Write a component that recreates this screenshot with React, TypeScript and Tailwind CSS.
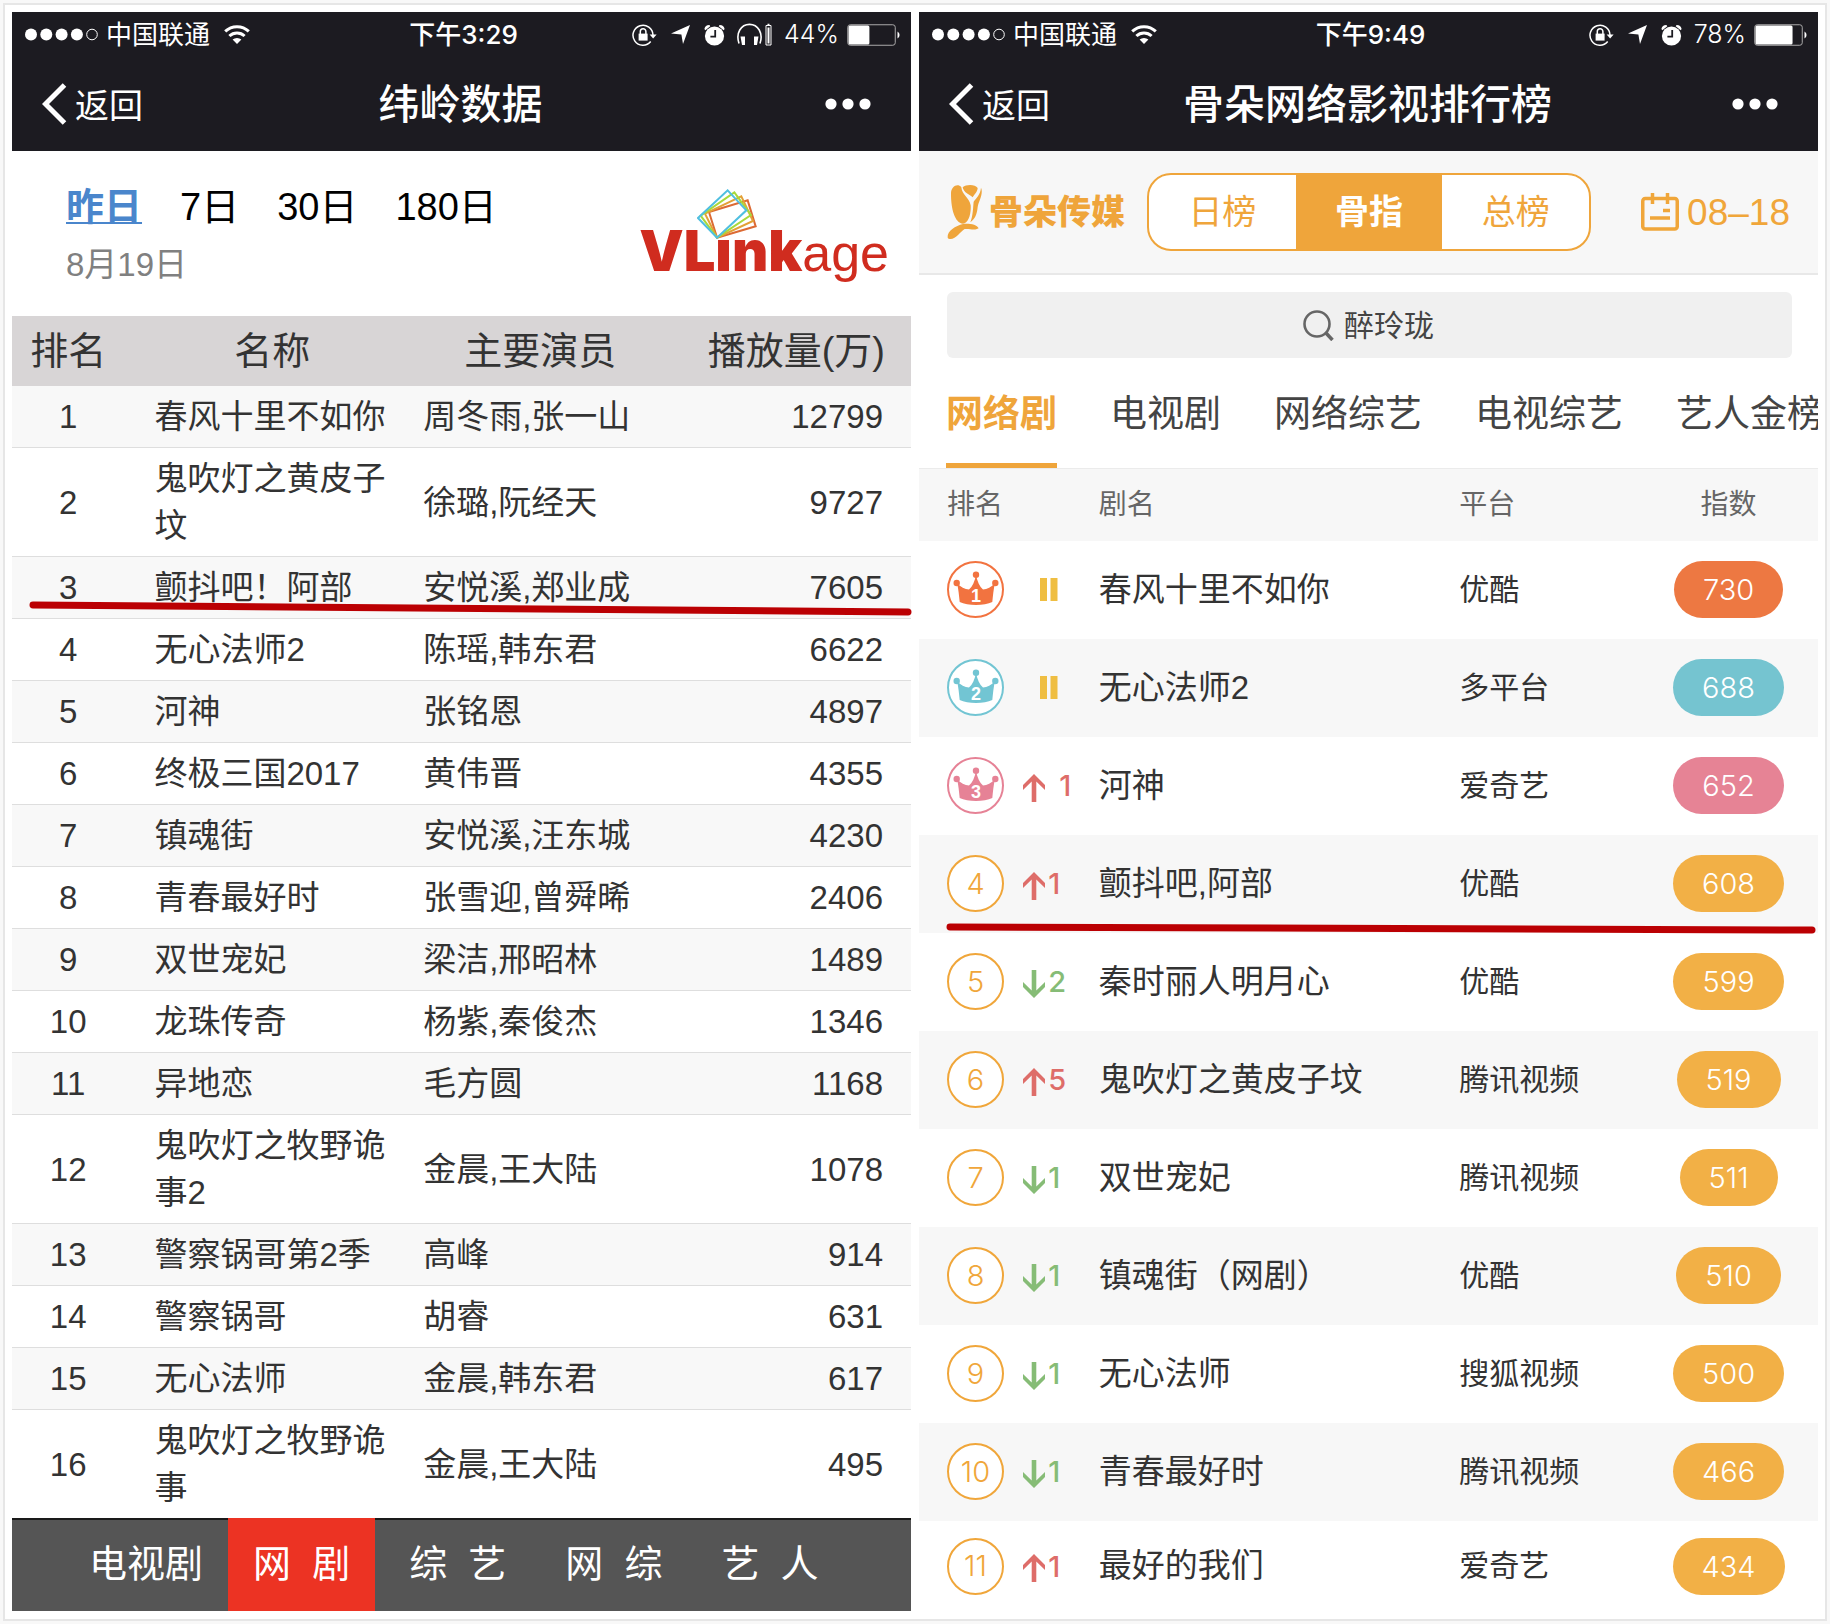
import React, { useState } from 'react';
import clsx from 'clsx';

const plays = [
  ['春风十里不如你', '周冬雨,张一山', 12799],
  ['鬼吹灯之黄皮子坟', '徐璐,阮经天', 9727],
  ['颤抖吧！阿部', '安悦溪,郑业成', 7605],
  ['无心法师2', '陈瑶,韩东君', 6622],
  ['河神', '张铭恩', 4897],
  ['终极三国2017', '黄伟晋', 4355],
  ['镇魂街', '安悦溪,汪东城', 4230],
  ['青春最好时', '张雪迎,曾舜晞', 2406],
  ['双世宠妃', '梁洁,邢昭林', 1489],
  ['龙珠传奇', '杨紫,秦俊杰', 1346],
  ['异地恋', '毛方圆', 1168],
  ['鬼吹灯之牧野诡事2', '金晨,王大陆', 1078],
  ['警察锅哥第2季', '高峰', 914],
  ['警察锅哥', '胡睿', 631],
  ['无心法师', '金晨,韩东君', 617],
  ['鬼吹灯之牧野诡事', '金晨,王大陆', 495],
];

// change > 0 moved up, < 0 moved down, 0 unchanged
const indexes = [
  { name: '春风十里不如你', platform: '优酷', change: 0, value: 730 },
  { name: '无心法师2', platform: '多平台', change: 0, value: 688 },
  { name: '河神', platform: '爱奇艺', change: 1, value: 652 },
  { name: '颤抖吧,阿部', platform: '优酷', change: 1, value: 608 },
  { name: '秦时丽人明月心', platform: '优酷', change: -2, value: 599 },
  { name: '鬼吹灯之黄皮子坟', platform: '腾讯视频', change: 5, value: 519 },
  { name: '双世宠妃', platform: '腾讯视频', change: -1, value: 511 },
  { name: '镇魂街（网剧）', platform: '优酷', change: -1, value: 510 },
  { name: '无心法师', platform: '搜狐视频', change: -1, value: 500 },
  { name: '青春最好时', platform: '腾讯视频', change: -1, value: 466 },
  { name: '最好的我们', platform: '爱奇艺', change: 1, value: 434 },
];

const medalText = ['text-[#f27340]', 'text-[#72c5d3]', 'text-[#e68296]'];
const medalBg = ['bg-[#ed7842]', 'bg-[#75c4d0]', 'bg-[#e68395]'];

function Wifi() {
  return (
    <svg viewBox="0 0 26 19" className="ml-3.5 h-[19px] w-[26px]" fill="none" stroke="white" strokeWidth="3">
      <path d="M1.2 6.4a17 17 0 0 1 23.6 0" />
      <path d="M5.4 11a11 11 0 0 1 15.2 0" />
      <path d="M8.6 14.6a6.6 6.6 0 0 1 8.8 0L13 19z" fill="white" stroke="none" />
    </svg>
  );
}

function LockIcon() {
  return (
    <svg viewBox="0 0 25 22" className="h-[22px] w-[25px]" fill="none" stroke="white" strokeWidth="1.5">
      <path d="M18.7 17.6A10 10 0 1 1 21 11" />
      <path d="M17.6 10.6h7l-3.5 4z" fill="white" stroke="none" />
      <path d="M8.3 10V7.6a2.8 2.8 0 0 1 5.6 0V10" />
      <path d="M6.6 9.6h9v7h-9z" fill="white" stroke="none" />
    </svg>
  );
}

function ArrowIcon() {
  return (
    <svg viewBox="0 0 19 19" className="ml-3.5 size-[19px]" fill="white">
      <path d="M19 0 12 19 10.4 9.6 0 8.6z" />
    </svg>
  );
}

function AlarmIcon() {
  return (
    <svg viewBox="0 0 21 22" className="ml-3.5 h-[22px] w-[21px]" fill="white">
      <circle cx="10.5" cy="12" r="9.6" />
      <path d="M.4 5A5 5 0 0 1 5.4 1l.9 1.2-5 4zM20.6 5a5 5 0 0 0-5-4l-.9 1.2 5 4z" />
      <path d="M11.2 6v6.6H6.4" fill="none" stroke="#1c1b21" strokeWidth="1.8" />
    </svg>
  );
}

function HeadphoneIcon() {
  return (
    <svg viewBox="0 0 35 23" className="ml-3 h-[23px] w-[35px]" fill="none" stroke="white" strokeWidth="1.6">
      <path d="M2 20.5C-1.5 10 4 1.4 12.5 1.4S26.5 10 23 20.5" />
      <path d="M3.5 13.5h4.5v8.5H5zM17 13.5h4.5L20 22h-3z" fill="white" stroke="none" />
      <path d="M29 2.5h5v19.5h-5z" strokeWidth="1" />
      <path d="M30.5 4.5h2v16h-2zM30.5.8h2V2h-2z" fill="white" stroke="none" />
    </svg>
  );
}

function Battery({ level }: { level: number }) {
  return (
    <svg viewBox="0 0 54 22" className="ml-2 h-[22px] w-[54px]">
      <rect x=".75" y=".75" width="47.5" height="20.5" rx="2.5" fill="none" stroke="#aaa" />
      <rect x="1.5" y="1.5" width={level * 0.475} height="19" rx="1.5" fill="white" />
      <path d="M50.5 7.5a4 4 0 0 1 0 7z" fill="white" />
    </svg>
  );
}

function PhoneHeader({ time, title, level, headphones }: { time: string; title: string; level: number; headphones?: boolean }) {
  return (
    <header className="bg-[#1c1b21] text-white">
      <div className="grid h-11 grid-cols-[1fr_auto_1fr] items-center pt-px pr-2 pl-3 text-[26px] leading-none font-['Inter','Noto_Sans_CJK_SC',sans-serif]">
        <div className="flex items-center">
          <svg viewBox="0 0 74 13" className="mr-2 h-[13px] w-[74px]" fill="white">
            <circle cx="7" cy="6.5" r="6" />
            <circle cx="22.3" cy="6.5" r="6" />
            <circle cx="37.6" cy="6.5" r="6" />
            <circle cx="52.9" cy="6.5" r="6" />
            <circle cx="68" cy="6.5" r="5.3" fill="none" stroke="white" />
          </svg>
          <span>中国联通</span>
          <Wifi />
        </div>
        <span className="font-medium">{time}</span>
        <div className="flex items-center justify-end pr-0.5">
          <LockIcon />
          <ArrowIcon />
          <AlarmIcon />
          {headphones && <HeadphoneIcon />}
          <span className="ml-3 text-[25px] font-light">{level}%</span>
          <Battery level={level} />
        </div>
      </div>
      <div className="grid h-[95px] grid-cols-[1fr_auto_1fr] items-center pr-8 pl-[30px]">
        <a href="#" className="flex items-center gap-2 text-[34px] leading-none">
          <svg viewBox="0 0 25 42" className="h-[42px] w-[25px]" fill="none" stroke="white" strokeWidth="5">
            <path d="M22.5 2 3.5 21l19 19" />
          </svg>
          <span className="pt-1">返回</span>
        </a>
        <h1 className="pt-1 text-[41px] leading-none font-medium">{title}</h1>
        <button aria-label="更多" className="mr-2 justify-self-end">
          <svg viewBox="0 0 46 12" className="h-3 w-[46px]" fill="white">
            <circle cx="6" cy="6" r="5.6" />
            <circle cx="23" cy="6" r="5.6" />
            <circle cx="40" cy="6" r="5.6" />
          </svg>
        </button>
      </div>
    </header>
  );
}

function VLinkageLogo() {
  return (
    <div className="relative mt-[70px] mr-[22px] h-[60px] whitespace-nowrap text-[52px] leading-[60px] text-[#d02c1f]">
      <span className="font-['Inter',sans-serif] text-[56px] font-black">VLınk</span>
      <span>age</span>
      <svg viewBox="269 62 180 150" className="absolute -top-8 left-[58px] h-[50px] w-[60px]" fill="none" strokeWidth="6">
        <path d="m421 96 24 78-116 34-24-77z" stroke="#dc6a34" />
        <path d="m402 84 35 74-108 50-36-72z" stroke="#e3a136" />
        <path d="m381 72 50 68-102 68-49-66z" stroke="#a8d93a" />
        <path d="m361 66 56 60-88 82-57-59z" stroke="#50bfe0" />
      </svg>
    </div>
  );
}

// red marker line along the bottom of a row
function Marker({ d }: { d: string }) {
  return (
    <svg viewBox="0 0 899 20" preserveAspectRatio="none" className="pointer-events-none absolute bottom-0 left-0 z-10 h-5 w-full overflow-visible" fill="none" stroke="#bb0003" strokeWidth="7" strokeLinecap="round">
      <path d={d} />
    </svg>
  );
}

function PlayRanking() {
  const [range, setRange] = useState('昨日');
  const [tab, setTab] = useState('网\u00a0\u00a0剧');

  return (
    <section className="min-w-0 bg-white">
      <PhoneHeader time="下午3:29" title="纬岭数据" level={44} headphones />
      <div className="flex h-[165px] justify-between pl-[54px]">
        <div className="pt-8">
          <div className="flex gap-[38px] text-[38px] leading-[48px] text-black">
            {['昨日', '7日', '30日', '180日'].map((r) => (
              <button
                key={r}
                onClick={() => setRange(r)}
                className={clsx('cursor-pointer', r === range && 'font-bold text-[#4a86cc] underline decoration-2 underline-offset-2')}
              >
                {r}
              </button>
            ))}
          </div>
          <p className="mt-3.5 text-[33px] leading-10 text-[#808080]">8月19日</p>
        </div>
        <VLinkageLogo />
      </div>
      <table className="w-full table-fixed text-[33px] leading-[47px] text-[#333]">
        <colgroup>
          <col className="w-[12.5%]" />
          <col className="w-[32.9%]" />
          <col className="w-[26.7%]" />
          <col />
        </colgroup>
        <thead>
          <tr className="h-[70px] bg-[#d8d5d6] text-[38px] whitespace-nowrap">
            <th className="font-normal">排名</th>
            <th className="px-8 font-normal">名称</th>
            <th className="font-normal">主要演员</th>
            <th className="pr-[26px] text-right font-normal">播放量(万)</th>
          </tr>
        </thead>
        <tbody>
          {plays.map(([name, actors, count], i) => (
            <tr key={name} className="relative border-b border-[#dedede] odd:bg-[#f8f8f8] last:border-0">
              <td className="text-center">
                {i + 1}
                {i === 2 && <Marker d="M21 7 896 14" />}
              </td>
              <td className="py-[7px] pr-8 pl-[30px]">{name}</td>
              <td className="pl-[3px] whitespace-nowrap">{actors}</td>
              <td className="pr-7 text-right">{count}</td>
            </tr>
          ))}
        </tbody>
      </table>
      <nav className="flex h-[93px] border-t-2 border-[#1a1a1a] bg-[#555] pl-[52px] text-[38px] text-white">
        {['电视剧', '网\u00a0\u00a0剧', '综\u00a0\u00a0艺', '网\u00a0\u00a0综', '艺\u00a0\u00a0人'].map((t, i) => (
          <button
            key={t}
            onClick={() => setTab(t)}
            className={clsx('-mt-0.5 cursor-pointer px-[25px] whitespace-nowrap', i > 1 && 'ml-[9px]', t === tab && 'bg-[#ec3323]')}
          >
            {t}
          </button>
        ))}
      </nav>
    </section>
  );
}

function GuduoLogo() {
  return (
    <div className="flex items-center gap-1.5 text-[#efa53b]">
      <svg viewBox="50 78 108 168" className="h-14 w-9" fill="currentColor">
        <path d="M62 108c-1-22 20-34 31-20 2 24 24 30 28 54 2 28-8 54-23 55-25-2-36-45-36-89z" />
        <path d="M97 88c10-10 38-10 45 2-1 12-8 16-15 28-12-10-27-14-30-30z" />
        <path d="M152 89c8 17-7 40-10 58-2 22-8 36-22 46 8-20 8-44 10-62 8-12 20-20 22-42z" />
        <path d="M52 238c-2-20 24-34 46-40 20-2 42 2 47 13-14 8-27 0-42 2-14 8-26 32-45 30-4 0-6-2-6-5z" />
      </svg>
      <span className="text-[34px] leading-none font-black">骨朵传媒</span>
    </div>
  );
}

function RankBadge({ rank }: { rank: number }) {
  if (rank > 3) {
    return (
      <span className="flex size-[57px] items-center justify-center rounded-full border-2 border-[#f0a63a] bg-white font-['Inter',sans-serif] text-[29px] font-light text-[#f0a63a]">
        {rank}
      </span>
    );
  }
  return (
    <svg viewBox="0 0 57 57" className={clsx('size-[57px]', medalText[rank - 1])} fill="currentColor">
      <circle cx="28.5" cy="28.5" r="27.5" fill="white" stroke="currentColor" strokeWidth="2" />
      <circle cx="9.7" cy="22" r="3.2" />
      <circle cx="29" cy="13.7" r="3.2" />
      <circle cx="48.3" cy="22" r="3.2" />
      <path d="M10 22c3.500 4 8 6.200 12 6.500 3.500-3 5.500-8 7-14 1.500 6 3.500 11 7 14 4-.3 8.500-2.500 12-6.500-1.500 6-2 13-2.700 19-8 4-24.600 4-32.600 0C12 35 11.500 28 10 22z" />
      <text x="29" y="40.5" textAnchor="middle" fill="white" className="font-['Liberation_Sans',sans-serif] text-[18px] font-bold">
        {rank}
      </text>
    </svg>
  );
}

function Trend({ change, spaced }: { change: number; spaced: boolean }) {
  if (change === 0) {
    return (
      <svg viewBox="0 0 18 23" className="ml-[17px] h-[23px] w-[18px]" fill="#efbe42">
        <path d="M0 0h7v23H0zM10.5 0h7v23h-7z" />
      </svg>
    );
  }
  return (
    <span
      className={clsx(
        "flex items-center font-['Inter',sans-serif] text-[29px] leading-none font-medium",
        spaced ? 'gap-3.5' : 'gap-[3px]',
        change > 0 ? 'text-[#de6d69]' : 'text-[#86bc76]'
      )}
    >
      <svg viewBox="0 0 22 28" className={clsx('h-7 w-[22px]', change < 0 ? 'translate-y-0.5 rotate-180' : 'translate-y-0.5')} fill="currentColor">
        <path d="m11 0 11 11v5l-8.700-8.500V28H8.700V7.500L0 16v-5z" />
      </svg>
      {Math.abs(change)}
    </span>
  );
}

function IndexRanking() {
  const [board, setBoard] = useState('骨指');
  const [tab, setTab] = useState('网络剧');

  return (
    <section className="min-w-0 overflow-hidden bg-white">
      <PhoneHeader time="下午9:49" title="骨朵网络影视排行榜" level={78} />
      <div className="flex h-[124px] items-center justify-between border-b-2 border-[#e8e8e8] bg-[#f7f7f7] px-7">
        <GuduoLogo />
        <div className="mr-7 flex h-[78px] w-[444px] overflow-hidden rounded-[24px] border-2 border-[#efa53b] bg-white">
          {['日榜', '骨指', '总榜'].map((b) => (
            <button
              key={b}
              onClick={() => setBoard(b)}
              className={clsx('flex-1 cursor-pointer text-[34px]', b === board ? 'bg-[#efa53b] font-bold text-white' : 'text-[#efa53b]')}
            >
              {b}
            </button>
          ))}
        </div>
        <button className="flex cursor-pointer items-center gap-2 text-[37px] leading-none text-[#f0a63a]">
          <svg viewBox="0 0 38 38" className="size-[38px]" fill="none" stroke="currentColor" strokeWidth="3.5">
            <rect x="1.75" y="5.5" width="34.5" height="30.5" rx="2.5" />
            <path d="M11.5 0v11M26.5 0v11M22 17.5h7M9 25h20" />
          </svg>
          08–18
        </button>
      </div>
      <div className="pt-[17px] pr-[26px] pl-7">
        <label className="flex h-[66px] items-center justify-center gap-2.5 rounded-md bg-[#f0f0f0] text-[#444]">
          <svg viewBox="0 0 31 31" className="size-[31px]" fill="none" stroke="#666" strokeWidth="2.6">
            <circle cx="14" cy="14" r="12.5" />
            <path d="m22.5 22.5 7 7.5" strokeWidth="3.5" />
          </svg>
          <input aria-label="搜索" defaultValue="醉玲珑" className="w-[92px] bg-transparent text-[30px] outline-none" />
        </label>
      </div>
      <nav className="flex h-[110px] gap-[53px] pl-[27px] text-[37px] whitespace-nowrap text-[#444]">
        {['网络剧', '电视剧', '网络综艺', '电视综艺', '艺人金榜'].map((t) => (
          <button
            key={t}
            onClick={() => setTab(t)}
            className={clsx('shrink-0 cursor-pointer border-b-[5px] pt-2', t === tab ? 'border-[#efa53b] font-bold text-[#efa53b]' : 'border-transparent')}
          >
            {t}
          </button>
        ))}
      </nav>
      <table className="w-full table-fixed text-left text-[#333]">
        <colgroup>
          <col className="w-[11.6%]" />
          <col className="w-[8.4%]" />
          <col className="w-[40.1%]" />
          <col className="w-[20%]" />
          <col />
        </colgroup>
        <thead>
          <tr className="h-[72px] border-t border-[#ebebeb] bg-[#f7f7f7] text-[28px] text-[#666]">
            <th colSpan={2} className="pl-7 font-normal">排名</th>
            <th className="font-normal">剧名</th>
            <th className="font-normal">平台</th>
            <th className="text-center font-normal">指数</th>
          </tr>
        </thead>
        <tbody>
          {indexes.map((row, i) => (
            <tr key={row.name} className="relative h-[98px] even:bg-[#f7f7f7] last:h-[91px]">
              <td className="pl-7">
                <RankBadge rank={i + 1} />
                {i === 3 && <Marker d="M31 14 893 17" />}
              </td>
              <td>
                <Trend change={row.change} spaced={i < 3} />
              </td>
              <td className="text-[33px] leading-10 whitespace-nowrap">{row.name}</td>
              <td className="text-[30px] leading-10">{row.platform}</td>
              <td className="text-center">
                <span className={clsx("inline-block rounded-full px-[29px] align-middle font-['Inter',sans-serif] text-[29px] leading-[57px] font-light text-white", medalBg[i] ?? 'bg-[#f2b046]')}>
                  {row.value}
                </span>
              </td>
            </tr>
          ))}
        </tbody>
      </table>
    </section>
  );
}

export default function App() {
  return (
    <div className="min-h-screen bg-[#f8f8f8] p-[3px] font-['Liberation_Sans','Noto_Sans_CJK_SC',sans-serif]">
      <main className="grid grid-cols-2 gap-2 border-2 border-[#e6e6e6] bg-white p-[7px]">
        <PlayRanking />
        <IndexRanking />
      </main>
    </div>
  );
}
